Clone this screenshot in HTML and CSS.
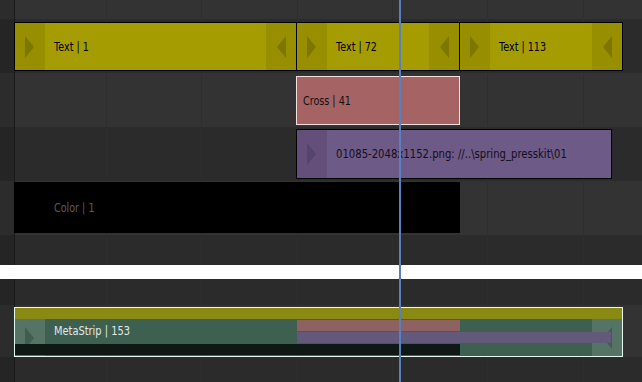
FILE: index.html
```html
<!DOCTYPE html>
<html lang="en">
<head>
    <meta charset="UTF-8">
    <meta name="viewport" content="width=device-width, initial-scale=1.0">
    <title>Sequencer</title>
    <link rel="stylesheet" href="styles.css">
</head>
<body>
    <div class="sequencer">
        <div class="channel light top"></div>

        <!-- channel 4: text strips -->
        <div class="channel dark">
            <div class="strip text-strip" style="margin-left: 14px; width: 283px;">
                <div class="handle left"><span class="arrow right-arrow"></span></div>
                <span class="label">Text | 1</span>
                <div class="handle right"><span class="arrow left-arrow"></span></div>
            </div>
            <div class="strip text-strip" style="margin-left: -1px; width: 164px;">
                <div class="handle left"><span class="arrow right-arrow"></span></div>
                <span class="label">Text | 72</span>
                <div class="handle right"><span class="arrow left-arrow"></span></div>
            </div>
            <div class="strip text-strip" style="margin-left: -1px; width: 164px;">
                <div class="handle left"><span class="arrow right-arrow"></span></div>
                <span class="label">Text | 113</span>
                <div class="handle right"><span class="arrow left-arrow"></span></div>
            </div>
        </div>

        <!-- channel 3: cross -->
        <div class="channel light">
            <div class="strip cross-strip" style="margin-left: 296px; width: 164px;">
                <span class="label">Cross | 41</span>
            </div>
        </div>

        <!-- channel 2: image -->
        <div class="channel dark pad-2">
            <div class="strip image-strip" style="margin-left: 296px; width: 316px;">
                <div class="handle left"><span class="arrow right-arrow"></span></div>
                <span class="label">01085-2048x1152.png: //..\spring_presskit\01</span>
                <div class="handle right"><span class="arrow left-arrow"></span></div>
            </div>
        </div>

        <!-- channel 1: color -->
        <div class="channel light pad-1">
            <div class="strip color-strip" style="margin-left: 14px; width: 446px;">
                <div class="handle left"></div>
                <span class="label">Color | 1</span>
                <div class="handle right"></div>
            </div>
        </div>

        <div class="channel dark tail"></div>

        <div class="divider"></div>

        <div class="channel dark gap"></div>

        <div class="channel light meta-channel">
            <div class="meta-strip" style="margin-left: 14px; width: 609px;">
                <div class="meta-handle left"><span class="arrow right-arrow"></span></div>
                <div class="meta-handle right"><span class="arrow left-arrow"></span></div>
                <div class="lanes">
                    <div class="lane"><span class="seg seg-text" style="width: 607px;"></span></div>
                    <div class="lane"><span class="seg seg-cross" style="margin-left: 282px; width: 163px;"></span></div>
                    <div class="lane"><span class="seg seg-image" style="margin-left: 282px; width: 314px;"></span></div>
                    <div class="lane"><span class="seg seg-color" style="width: 445px;"></span></div>
                </div>
                <span class="meta-label">MetaStrip | 153</span>
            </div>
        </div>

        <div class="channel dark rest"></div>

        <div class="playhead" style="left: 399px;"></div>
    </div>
</body>
</html>
```

FILE: styles.css
```css
* {
    margin: 0;
    padding: 0;
    box-sizing: border-box;
}

html, body {
    width: 642px;
    height: 382px;
    overflow: hidden;
    background-color: #2b2b2b;
    font-family: "DejaVu Sans", Verdana, sans-serif;
}

.sequencer {
    --grid: linear-gradient(90deg,
        transparent 106px, #2e2e2e 106px 107px,
        transparent 107px 201px, #2e2e2e 201px 202px,
        transparent 202px 297px, #2e2e2e 297px 298px,
        transparent 298px 392px, #2e2e2e 392px 393px,
        transparent 393px 487px, #2e2e2e 487px 488px,
        transparent 488px 583px, #2e2e2e 583px 584px,
        transparent 584px);
    --sidebar: linear-gradient(90deg, rgba(0,0,0,0.14) 0 14px, #191919 14px 15px, transparent 15px);
    position: relative;
    width: 642px;
    height: 382px;
    display: flex;
    flex-direction: column;
}

.channel {
    height: 54px;
    flex-shrink: 0;
    display: flex;
    align-items: flex-start;
    padding-top: 3px;
    background-image: var(--sidebar), var(--grid);
}

.channel.light {
    background-color: #333333;
}

.channel.dark {
    background-color: #2b2b2b;
}

.channel.top {
    height: 19px;
}

.channel.pad-2 {
    padding-top: 2px;
}

.channel.pad-1 {
    padding-top: 1px;
}

.channel.tail {
    height: 30px;
}

.channel.gap {
    height: 26px;
}

.channel.meta-channel {
    height: 52px;
    padding-top: 2px;
}

.channel.rest {
    flex: 1;
}

.divider {
    height: 14px;
    flex-shrink: 0;
    background-color: #ffffff;
}

/* strips */

.strip {
    height: 49px;
    flex-shrink: 0;
    display: flex;
    align-items: center;
    border: 1px solid #000;
    overflow: hidden;
}

.pad-2 .strip {
    height: 50px;
}

.pad-1 .strip {
    height: 51px;
}

.handle {
    width: 30px;
    height: 100%;
    flex-shrink: 0;
    display: flex;
    align-items: center;
    padding: 0 10px;
}

.handle.right {
    margin-left: auto;
    justify-content: flex-end;
}

.arrow {
    width: 0;
    height: 0;
    border-top: 11px solid transparent;
    border-bottom: 11px solid transparent;
}

.right-arrow {
    border-left: 9px solid var(--arrow);
}

.left-arrow {
    border-right: 9px solid var(--arrow);
}

.label {
    display: inline-block;
    margin-left: 9px;
    font-size: 12px;
    white-space: nowrap;
    transform: scaleX(0.8);
    transform-origin: left center;
    color: #000;
}

.text-strip {
    background-color: #a49c00;
    --arrow: #7d7700;
}

.text-strip .handle {
    background-color: #978f00;
}

.cross-strip {
    background-color: #a56363;
    border-color: #f4dede;
}

.cross-strip .label {
    margin-left: 6px;
    color: #141010;
}

.image-strip {
    background-color: #6e5a86;
    --arrow: #55446b;
}

.image-strip .handle {
    background-color: #634f7a;
}

.image-strip .label {
    color: #120f18;
    transform: scaleX(0.84);
}

.color-strip {
    background-color: #000;
}

.color-strip .label {
    color: #5c5c5c;
}

/* meta strip */

.meta-strip {
    position: relative;
    height: 50px;
    flex-shrink: 0;
    border: 1px solid #e6f8f0;
    background-color: #3d6050;
}

.meta-handle {
    position: absolute;
    top: 0;
    bottom: 0;
    width: 30px;
    display: flex;
    align-items: center;
    padding: 0 10px;
    padding-top: 11px;
    background-color: rgba(255,255,255,0.13);
    --arrow: #3e5f50;
}

.meta-handle.left {
    left: 0;
}

.meta-handle.right {
    right: 0;
    justify-content: flex-end;
}

.lanes {
    position: relative;
    height: 100%;
    display: flex;
    flex-direction: column;
    gap: 1px;
}

.lane {
    height: 11px;
    display: flex;
}

.seg {
    display: block;
    height: 100%;
}

.seg-text {
    background-color: #8a8914;
}

.seg-cross {
    background-color: #8f6262;
}

.seg-image {
    background-color: #635a7b;
}

.seg-color {
    background-color: #0f1814;
}

.meta-label {
    position: absolute;
    left: 39px;
    top: 16px;
    font-size: 12px;
    white-space: nowrap;
    color: #e4e8e6;
    transform: scaleX(0.82);
    transform-origin: left center;
}

.playhead {
    position: absolute;
    top: 0;
    bottom: 0;
    width: 2px;
    background-color: #5680c2;
}
```
